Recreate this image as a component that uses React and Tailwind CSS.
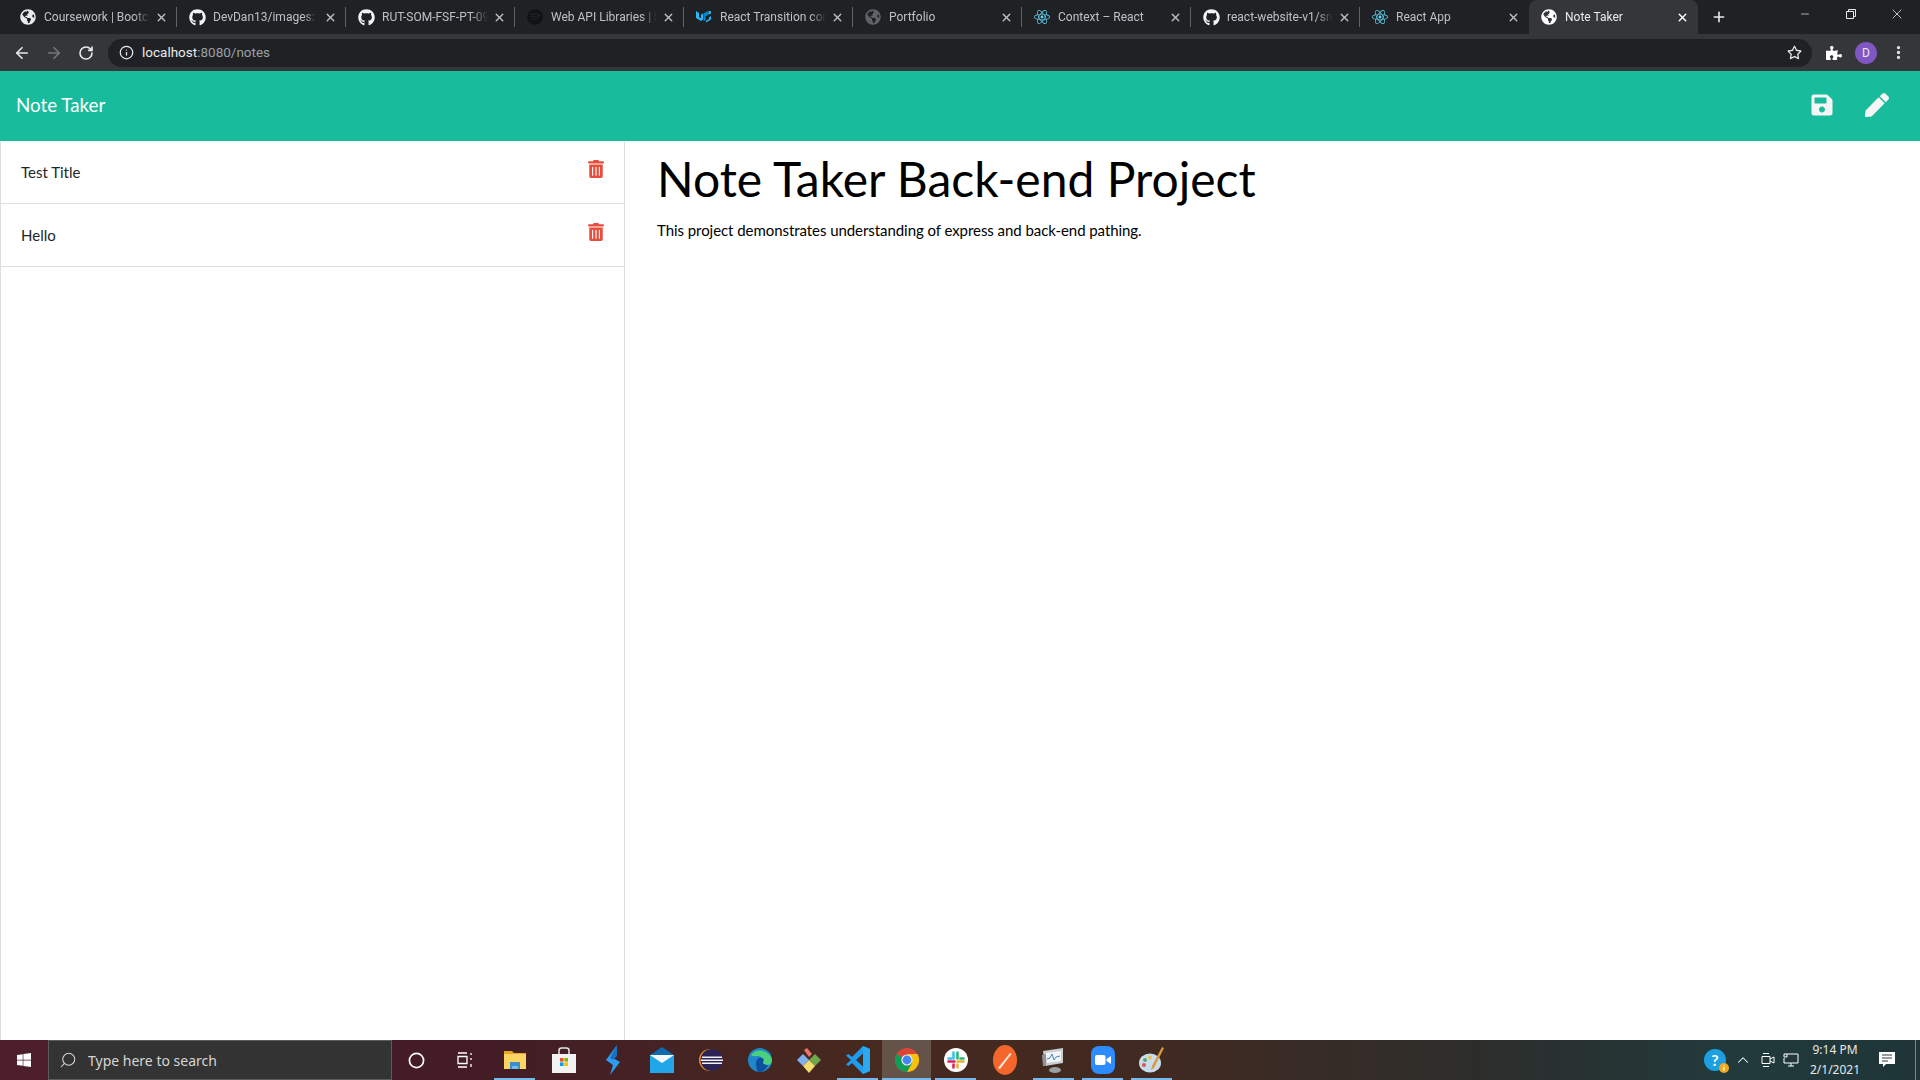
import React from 'react';
import { FaGithub, FaGlobeAmericas, FaReact, FaSpotify, FaSave, FaPen, FaTrashAlt, FaWindows, FaPuzzlePiece, FaRegStar } from 'react-icons/fa';
import { ArrowLeft, ArrowRight, RotateCw, Info, X, Plus, Search, EllipsisVertical, Minus, ChevronUp, Circle } from 'lucide-react';

const tabs = [
  { title: 'Coursework | Bootcamp Spot', icon: <FaGlobeAmericas size={16} className="text-[#e8eaed]" /> },
  { title: 'DevDan13/images: Images', icon: <FaGithub size={17} className="text-[#f1f3f4]" /> },
  { title: 'RUT-SOM-FSF-PT-09-2020', icon: <FaGithub size={17} className="text-[#f1f3f4]" /> },
  { title: 'Web API Libraries | Spotify', icon: <FaSpotify size={16} className="text-[#111214]" /> },
  { title: 'React Transition components', icon: <MuiLogo /> },
  { title: 'Portfolio', icon: <FaGlobeAmericas size={16} className="text-[#5f6368]" /> },
  { title: 'Context – React', icon: <FaReact size={16} className="text-[#61dafb]" /> },
  { title: 'react-website-v1/src', icon: <FaGithub size={17} className="text-[#f1f3f4]" /> },
  { title: 'React App', icon: <FaReact size={16} className="text-[#61dafb]" /> },
];

const notes = ['Test Title', 'Hello'];

function MuiLogo() {
  return (
    <svg width="15" height="14" viewBox="0 0 15 14">
      <path d="M0 1l3 2v4l2 1.200V4.500L7 3.500v6L5 11 0 8z" fill="#29b6f6" />
      <path d="M7.500 3.500L12 1v4L9.500 6.500V10L7.500 11.500z" fill="#0288d1" />
      <path d="M12.500 1H15v2.500L12.500 5zM10 12.500l5-3V6l-2 1.200V9l-3 1.800z" fill="#29b6f6" />
    </svg>
  );
}

function Tab({ title, icon, active, last }) {
  return (
    <div
      className={
        'relative flex h-[34px] w-[169px] shrink-0 items-center pl-[12px] pr-[9px] ' +
        (active ? 'rounded-t-[8px] bg-[#35363a] text-[#e8eaed]' : 'text-[#bdc1c6]')
      }
    >
      <span className="flex w-[24px] shrink-0 items-center">{icon}</span>
      <span className="w-[106px] overflow-hidden whitespace-nowrap font-['Roboto',sans-serif] text-[12px] [mask-image:linear-gradient(to_right,black_85%,transparent)]">
        {title}
      </span>
      <X size={13} strokeWidth={2.6} className={'ml-auto ' + (active ? 'text-white' : 'text-[#bdc1c6]')} />
      {!last && !active && <span className="absolute right-0 top-[7px] h-[20px] w-px bg-[#5f6368]" />}
    </div>
  );
}

function TabStrip() {
  return (
    <div className="flex h-[34px] items-center bg-[#202124] pl-[8px]">
      {tabs.map((t, i) => (
        <Tab key={i} title={t.title} icon={t.icon} last={i === tabs.length - 1} />
      ))}
      <Tab title="Note Taker" active icon={<FaGlobeAmericas size={16} className="text-white" />} />
      <Plus size={16} strokeWidth={2.4} className="ml-[13px] text-[#e8eaed]" />
      <div className="ml-auto flex h-full items-start text-[#e8eaed]">
        <div className="flex h-[28px] w-[46px] items-center justify-center">
          <Minus size={12} strokeWidth={1.4} />
        </div>
        <div className="flex h-[28px] w-[46px] items-center justify-center">
          <svg width="12" height="12" viewBox="0 0 12 12" fill="none" stroke="currentColor">
            <path d="M1.5 3.5h7v7h-7zM3.5 3.5v-2h7v7h-2" />
          </svg>
        </div>
        <div className="flex h-[28px] w-[46px] items-center justify-center">
          <X size={16} strokeWidth={1.2} />
        </div>
      </div>
    </div>
  );
}

function Toolbar() {
  return (
    <div className="flex h-[37px] items-center bg-[#35363a] pl-[13px] pr-[13px] text-[#e8eaed]">
      <ArrowLeft size={18} strokeWidth={2.2} />
      <ArrowRight size={18} strokeWidth={2.2} className="ml-[14px] text-[#75777b]" />
      <RotateCw size={16} strokeWidth={2.4} className="ml-[15px]" />
      <div className="ml-[14px] flex h-[28px] w-[1704px] items-center rounded-full bg-[#202124] pl-[11px] pr-[10px]">
        <Info size={15} strokeWidth={2} />
        <span className="ml-[8px] font-['Roboto',sans-serif] text-[13.5px]">
          localhost<span className="text-[#9aa0a6]">:8080/notes</span>
        </span>
        <FaRegStar size={15} className="ml-auto" />
      </div>
      <FaPuzzlePiece size={16} className="ml-[14px] text-white" />
      <div className="ml-[13px] flex h-[22px] w-[22px] items-center justify-center rounded-full bg-[#7e57c2] font-['Roboto',sans-serif] text-[12px] text-[#e8eaed]">
        D
      </div>
      <EllipsisVertical size={17} strokeWidth={2.6} className="ml-[13px]" />
    </div>
  );
}

function ChromeIcon() {
  return (
    <svg width="24" height="24" viewBox="0 0 24 24">
      <circle cx="12" cy="12" r="12" fill="#db4437" />
      <path d="M12 12L1.6 6A12 12 0 0 0 12 24l6-10.4z" fill="#0f9d58" />
      <path d="M12 6h10.4A12 12 0 0 1 12 24l5.2-9z" fill="#f4c20d" />
      <circle cx="12" cy="12" r="5.6" fill="#e8eaed" />
      <circle cx="12" cy="12" r="4.4" fill="#4285f4" />
    </svg>
  );
}

function FolderIcon() {
  return (
    <svg width="22" height="20" viewBox="0 0 22 20">
      <path d="M0 1h8l2 2h12v16H0z" fill="#e8a825" />
      <path d="M0 4h22v15H0z" fill="#fcd462" />
      <path d="M6 12h10v7h-2v-3H8v3H6z" fill="#3a8ed0" />
      <path d="M8 16h6v3H8z" fill="#6dbcee" />
    </svg>
  );
}

function StoreIcon() {
  return (
    <svg width="24" height="26" viewBox="0 0 24 26">
      <path d="M7 7V3.5C7 2 8 1 9.5 1h5C16 1 17 2 17 3.5V7" fill="none" stroke="#e6e6e6" strokeWidth="1.5" />
      <path d="M0 7h24v19H0z" fill="#f2f2f2" />
      <path d="M8 11h3.6v3.6H8z" fill="#f25022" />
      <path d="M12.4 11H16v3.6h-3.6z" fill="#7fba00" />
      <path d="M8 15.4h3.6V19H8z" fill="#00a4ef" />
      <path d="M12.4 15.4H16V19h-3.6z" fill="#ffb900" />
    </svg>
  );
}

function BoltIcon() {
  return (
    <svg width="14" height="30" viewBox="0 0 14 30">
      <path d="M11 0L0 15l7 5-3 10 10-13-7-4z" fill="#2a9df4" />
      <path d="M11 0L4 13l3 2 4-4z" fill="#1b6fc2" />
    </svg>
  );
}

function MailIcon() {
  return (
    <svg width="24" height="26" viewBox="0 0 24 26">
      <path d="M12 0l12 8v18H0V8z" fill="#0e6bb0" />
      <path d="M0 8h24v18H0z" fill="#21a7e8" />
      <path d="M0 8h24L12 16z" fill="#f5f8fb" />
    </svg>
  );
}

function EclipseIcon() {
  return (
    <svg width="24" height="24" viewBox="0 0 24 24">
      <circle cx="11" cy="12" r="11" fill="#f7941e" />
      <circle cx="12.5" cy="12" r="11" fill="#2c2255" />
      <path d="M3 8.5h20v1.4H3zM2 11.5h22v1.4H2zM3 14.5h20v1.4H3z" fill="#f4f2fa" />
    </svg>
  );
}

function EdgeIcon() {
  return (
    <svg width="24" height="24" viewBox="0 0 24 24">
      <circle cx="12" cy="12" r="12" fill="#1f87c9" />
      <path d="M3 7A12 12 0 0 1 24 12c0 3-2 5-5 5-3 0-4-1.500-4-3 0-3-2-6-5-6-3 0-5 1-7-1z" fill="#4bd07e" />
      <path d="M8 15c0-4 3-6 6-5 2 .5 2 3 1 4-1 2 2 3 5 3-2 4-5 7-9 7-2 0-3-5-3-9z" fill="#0c4f9c" />
    </svg>
  );
}

function GitKrakenIcon() {
  return (
    <svg width="24" height="26" viewBox="0 0 24 26">
      <path d="M7 3l3-2 5 6-3 3z" fill="#e8746a" />
      <path d="M0 13l6-6 6 6-6 6z" fill="#7fb0f0" />
      <path d="M12 13l6-6 6 6-6 6z" fill="#6ea84d" />
      <path d="M6 19l6-6 6 6-6 7z" fill="#f3dc6b" />
    </svg>
  );
}

function VscodeIcon() {
  return (
    <svg width="24" height="28" viewBox="0 0 24 28">
      <path d="M17 0l7 3v22l-7 3L6 17l-3.500 3L0 18.500 5 14 0 9.500 2.500 8 6 11z" fill="#1f9cf0" />
      <path d="M17 7.500L10 14l7 6.500z" fill="#3a3028" />
      <path d="M17 0l7 3v22l-7 3z" fill="#2aa9f2" />
    </svg>
  );
}

function SlackIcon() {
  return (
    <svg width="24" height="24" viewBox="0 0 24 24">
      <circle cx="12" cy="12" r="12" fill="#fff" />
      <path d="M9.500 4.500v6M4.500 10.500h3" stroke="#36c5f0" strokeWidth="2.600" strokeLinecap="round" />
      <path d="M13.500 4.500v6M19.500 10.500h-3" stroke="#2eb67d" strokeWidth="2.600" strokeLinecap="round" />
      <path d="M19.500 13.500h-6M13.500 19.500v-3" stroke="#ecb22e" strokeWidth="2.600" strokeLinecap="round" />
      <path d="M4.500 13.500h6M9.500 19.500v-3" stroke="#e01e5a" strokeWidth="2.600" strokeLinecap="round" />
    </svg>
  );
}

function PostmanIcon() {
  return (
    <svg width="24" height="30" viewBox="0 0 24 30">
      <ellipse cx="12" cy="15" rx="12" ry="15" fill="#f4662c" />
      <path d="M5 23L17 8l1.500 1L7 24z" fill="#fde6da" />
    </svg>
  );
}

function MonitorIcon() {
  return (
    <svg width="24" height="26" viewBox="0 0 24 26">
      <path d="M1 4l20-3v15L3 19z" fill="#c9cdd0" />
      <path d="M4 6l15-2v10L5 16z" fill="#f3f5f6" />
      <path d="M5 12l3-1 2-4 2 6 2-3 4-1" fill="none" stroke="#4a86c5" strokeWidth="1" />
      <ellipse cx="13" cy="23" rx="6" ry="3" fill="#9ba0a3" />
      <path d="M0 8l4-1v12H1z" fill="#8f9496" />
    </svg>
  );
}

function ZoomIcon() {
  return (
    <div className="flex h-[28px] w-[24px] items-center justify-center rounded-[8px] bg-[#2d8cff]">
      <svg width="16" height="10" viewBox="0 0 16 10" fill="#fff">
        <rect width="10.500" height="10" rx="2" />
        <path d="M11.500 4L16 1v8l-4.500-3z" />
      </svg>
    </div>
  );
}

function PaintIcon() {
  return (
    <svg width="26" height="28" viewBox="0 0 26 28">
      <ellipse cx="11" cy="17" rx="11" ry="9.500" fill="#c9dcec" />
      <circle cx="6" cy="14" r="2" fill="#5aa469" />
      <circle cx="11" cy="11.500" r="2" fill="#e8c14a" />
      <circle cx="5" cy="19" r="2" fill="#d9534f" />
      <path d="M23 1l2 1-10 20-3 2 1-4z" fill="#d89a3c" />
    </svg>
  );
}

const taskbarApps = [
  { icon: <FolderIcon />, open: true },
  { icon: <StoreIcon /> },
  { icon: <BoltIcon /> },
  { icon: <MailIcon /> },
  { icon: <EclipseIcon /> },
  { icon: <EdgeIcon /> },
  { icon: <GitKrakenIcon /> },
  { icon: <VscodeIcon />, open: true },
  { icon: <ChromeIcon />, open: true, active: true },
  { icon: <SlackIcon />, open: true },
  { icon: <PostmanIcon /> },
  { icon: <MonitorIcon />, open: true },
  { icon: <ZoomIcon />, open: true },
  { icon: <PaintIcon />, open: true },
];

function Taskbar() {
  return (
    <div className="flex h-[40px] shrink-0 items-stretch bg-[linear-gradient(to_right,#4d1e2c_0%,#431c26_25%,#47291f_45%,#3f2a22_62%,#2b2e2c_78%,#223a3c_90%,#1f3538_100%)] text-white">
      <div className="flex w-[48px] items-center justify-center">
        <FaWindows size={16} />
      </div>
      <div className="flex w-[344px] items-center border border-[#5b5b5b] bg-[#333333] pl-[10px] text-[#d6d6d6]">
        <Search size={18} strokeWidth={1.4} className="-scale-x-100" />
        <span className="ml-[11px] font-['Noto_Sans',sans-serif] text-[14px]">Type here to search</span>
      </div>
      <div className="flex w-[49px] items-center justify-center">
        <Circle size={17} strokeWidth={2.4} />
      </div>
      <div className="flex w-[49px] items-center justify-center">
        <svg width="17" height="16" viewBox="0 0 17 16" fill="none" stroke="#fff" strokeWidth="1.300">
          <path d="M1 1h9M1 15h9M1 4.500h9v7H1zM14 1v2M14 6v2M14 12v3" />
        </svg>
      </div>
      {taskbarApps.map((app, i) => (
        <div
          key={i}
          className={
            'relative flex w-[49px] items-center justify-center ' + (app.active ? 'bg-[#645349]' : '')
          }
        >
          {app.icon}
          {app.open && (
            <span
              className={
                'absolute bottom-0 h-[2px] bg-[#76b9ed] ' + (app.active ? 'inset-x-0' : 'inset-x-[4px]')
              }
            />
          )}
        </div>
      ))}
      <div className="ml-auto flex items-center">
        <div className="relative flex h-[22px] w-[22px] items-center justify-center rounded-full bg-[#1ba1e2] text-[16px] font-bold">
          ?
          <span className="absolute -bottom-[2px] -right-[3px] flex h-[10px] w-[10px] items-center justify-center rounded-full bg-[#f5a623] text-[8px] leading-none">
            i
          </span>
        </div>
        <ChevronUp size={18} strokeWidth={1.4} className="ml-[8px]" />
        <svg className="ml-[8px]" width="16" height="16" viewBox="0 0 16 16" fill="none" stroke="#fff">
          <path d="M2 4.500h8v7H2zM10 7l4-2v6l-4-2M3 1.500h6M3 14.500h6" />
        </svg>
        <svg className="ml-[7px]" width="16" height="14" viewBox="0 0 16 14" fill="none" stroke="#fff">
          <path d="M4 1h11v9H1V5M8 10v3M5 13h6M1 1h3v3H1z" />
        </svg>
        <div className="ml-[5px] flex w-[62px] flex-col items-center font-['Noto_Sans',sans-serif] text-[12px] leading-[20px] text-[#e8e8e8]">
          <span className="whitespace-nowrap">9:14 PM</span>
          <span className="whitespace-nowrap">2/1/2021</span>
        </div>
        <svg className="ml-[13px]" width="17" height="17" viewBox="0 0 17 17">
          <path d="M0 0h16v12H7l-3 3v-3H0z" fill="#fff" />
          <path d="M3 3h10M3 6h10M3 9h6" stroke="#2a3a3c" />
        </svg>
        <div className="ml-[19px] mr-[4px] h-full w-px bg-[#7c8a8c]" />
      </div>
    </div>
  );
}

const App = () => {
  return (
    <div className="flex h-screen flex-col overflow-hidden bg-white font-['Lato',sans-serif]">
      <TabStrip />
      <Toolbar />
      <div className="flex h-[70px] shrink-0 items-center justify-between bg-[#18bc9c] pb-[2px] pl-[16px] pr-[31px]">
        <span className="text-[18.75px] text-white">Note Taker</span>
        <div className="flex items-center gap-[31px] text-[#f5f5f5]">
          <FaSave size={24} />
          <FaPen size={24} />
        </div>
      </div>
      <div className="flex min-h-0 flex-1">
        <div className="w-[625px] shrink-0 border-x border-[#dedede]">
          {notes.map((note) => (
            <div key={note} className="flex h-[63px] justify-between border-b border-[#dedede] pl-[20px] pr-[19px] pt-[19px]">
              <span className="text-[15px] leading-[24px] text-[#212529]">{note}</span>
              <FaTrashAlt size={18} className="text-[#e74c3c]" />
            </div>
          ))}
        </div>
        <div className="flex-1 pl-[32px] pt-[8px]">
          <h1 className="text-[48px] leading-[60px] text-black">Note Taker Back-end Project</h1>
          <p className="mt-[9px] text-[15px] leading-[24px] tracking-[-0.06px] text-black">
            This project demonstrates understanding of express and back-end pathing.
          </p>
        </div>
      </div>
      <Taskbar />
    </div>
  );
};

export default App;
